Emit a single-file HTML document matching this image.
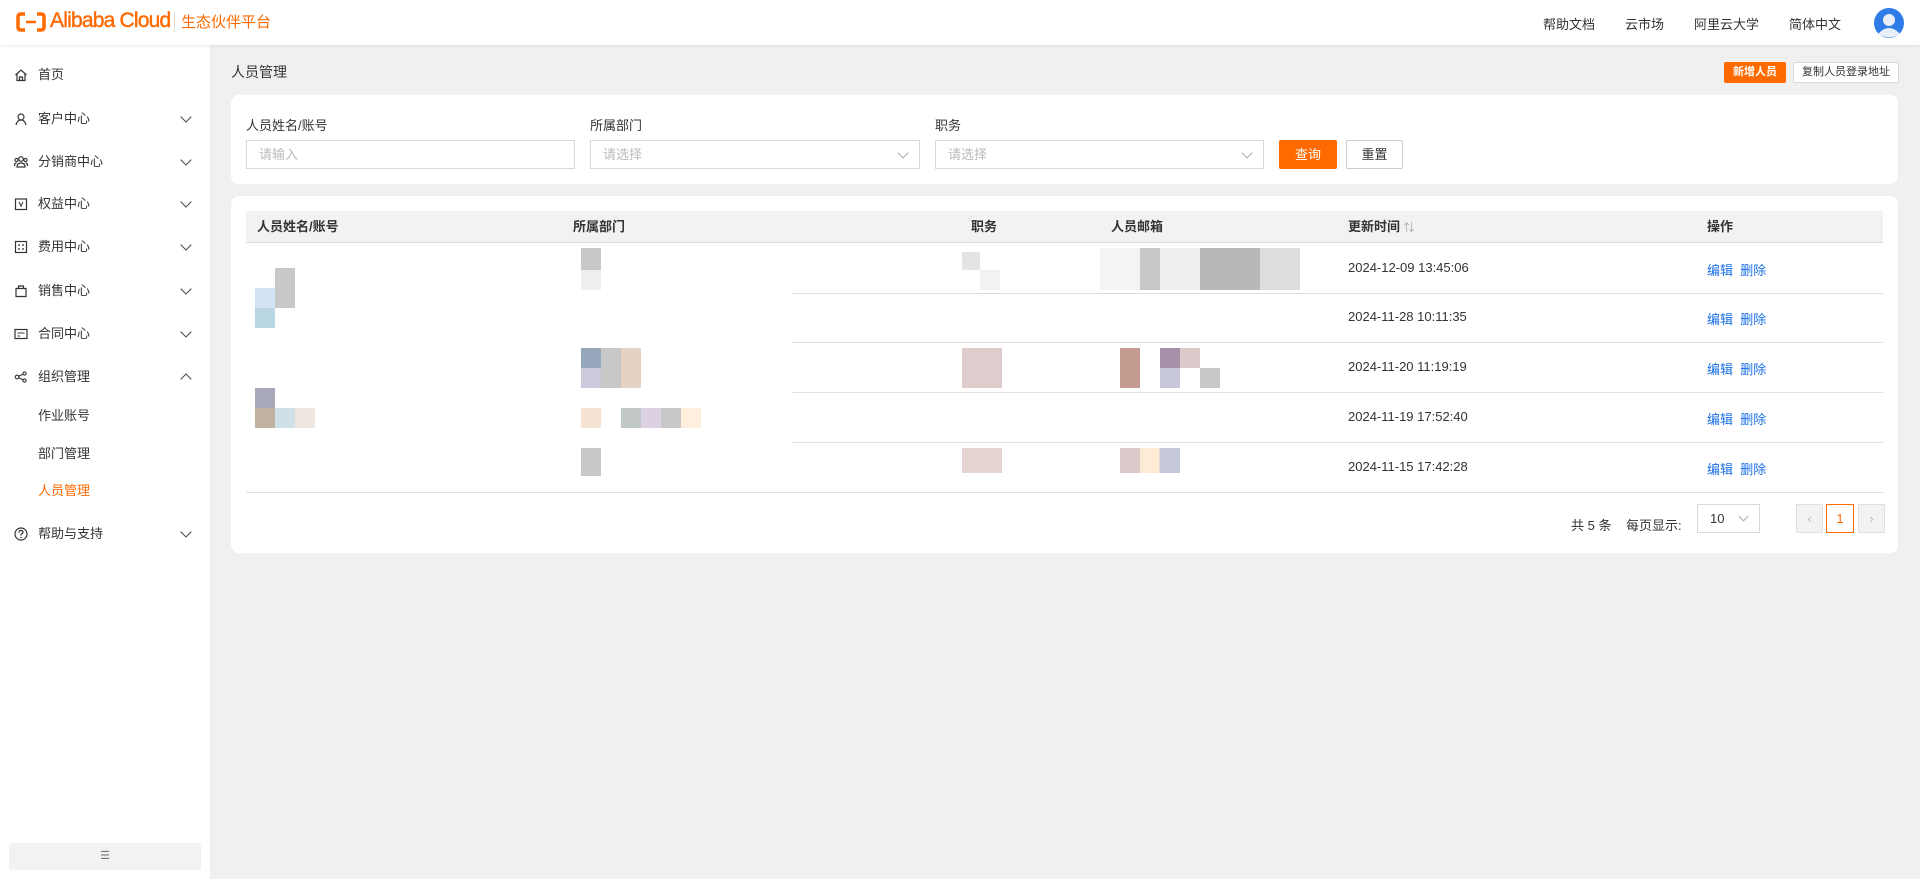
<!DOCTYPE html>
<html><head><meta charset="utf-8"><style>
*{box-sizing:border-box;margin:0;padding:0}
body{width:1920px;height:879px;overflow:hidden;background:#f0f0f0;font-family:"Liberation Sans","Noto Sans CJK SC",sans-serif;font-size:13px;color:#333;position:relative}
.abs{position:absolute}
.hdr{left:0;top:0;width:1920px;height:45px;background:#fff;box-shadow:0 1px 3px rgba(0,0,0,.08);z-index:2}
.side{left:0;top:45px;width:210px;height:834px;background:#fff}
.mi{position:absolute;left:14px;width:180px;height:20px;font-size:13px;color:#333;line-height:20px}
.mi .ic{position:absolute;left:0;top:3px;width:14px;height:14px}
.mi .t{position:absolute;left:24px}
.mi .ch{position:absolute;left:168px;top:4px;width:8px;height:8px;border-right:1.5px solid #444;border-bottom:1.5px solid #444;transform:rotate(45deg)}
.mi .ch.up{transform:rotate(-135deg);top:8px}
.card{background:#fff;border-radius:8px}
.inp{height:29px;border:1px solid #d9d9d9;background:#fff;color:#bbb;padding-left:12px;line-height:27px;font-size:13px}
.inp .dd{position:absolute;right:12px;top:8px;width:8px;height:8px;border-right:1px solid #aaa;border-bottom:1px solid #aaa;transform:rotate(45deg)}
.th{top:0;font-weight:bold;color:#333;line-height:32px}
.rl{height:1px;background:#e0e0e0}
.dt{color:#333}
.lk{color:#1a6fe6}
.px{position:absolute}
</style></head><body>
<div class="abs hdr">
 <svg class="abs" style="left:16px;top:12px" width="30" height="20" viewBox="0 0 30 20"><path d="M9 2H5Q2 2 2 5V15Q2 18 5 18H9M21 2H25Q28 2 28 5V15Q28 18 25 18H21" fill="none" stroke="#ff6a00" stroke-width="3.5"/><path d="M10 10H20" stroke="#ff6a00" stroke-width="2.5"/></svg>
 <div class="abs" style="left:50px;top:9px;font-size:21px;color:#ff6a00;letter-spacing:-0.8px;-webkit-text-stroke:0.4px #ff6a00">Alibaba Cloud</div>
 <div class="abs" style="left:174px;top:12px;width:1px;height:20px;background:#ddd"></div>
 <div class="abs" style="left:181px;top:11px;font-size:15px;color:#ff6a00">生态伙伴平台</div>
 <div class="abs" style="left:1543px;top:14px;font-size:13px">帮助文档</div>
 <div class="abs" style="left:1625px;top:14px;font-size:13px">云市场</div>
 <div class="abs" style="left:1694px;top:14px;font-size:13px">阿里云大学</div>
 <div class="abs" style="left:1789px;top:14px;font-size:13px">简体中文</div>
 <svg class="abs" style="left:1874px;top:8px" width="30" height="30" viewBox="0 0 30 30"><circle cx="15" cy="15" r="15" fill="#2f7ce8"/><circle cx="15" cy="12" r="6" fill="#e8eef8"/><path d="M4 26Q15 14 26 26Q15 33 4 26Z" fill="#e8eef8"/></svg>
</div>
<div class="abs side">
 <div class="mi" style="top:20px"><svg class="ic" viewBox="0 0 14 14"><path d="M1.5 7L7 2L12.5 7M3 6V12.5H11V6M5.5 12.5V9H8.5V12.5" fill="none" stroke="#333" stroke-width="1.2"/></svg><span class="t">首页</span></div>
 <div class="mi" style="top:64px"><svg class="ic" viewBox="0 0 14 14"><circle cx="7" cy="5" r="3" fill="none" stroke="#333" stroke-width="1.2"/><path d="M2 13Q3 8 7 8Q11 8 12 13" fill="none" stroke="#333" stroke-width="1.2"/></svg><span class="t">客户中心</span><i class="ch"></i></div>
 <div class="mi" style="top:107px"><svg class="ic" viewBox="0 0 14 14"><circle cx="7" cy="4" r="2.3" fill="none" stroke="#333" stroke-width="1.2"/><circle cx="2.5" cy="5" r="1.6" fill="none" stroke="#333" stroke-width="1.1"/><circle cx="11.5" cy="5" r="1.6" fill="none" stroke="#333" stroke-width="1.1"/><path d="M3 12Q3 8 7 8Q11 8 11 12ZM0.5 11Q0.5 8 2.5 8M13.5 11Q13.5 8 11.5 8" fill="none" stroke="#333" stroke-width="1.2"/></svg><span class="t">分销商中心</span><i class="ch"></i></div>
 <div class="mi" style="top:149px"><svg class="ic" viewBox="0 0 14 14"><rect x="1.5" y="2" width="11" height="10.5" fill="none" stroke="#333" stroke-width="1.2"/><path d="M5 5L7 9L9 5M7 9V10" fill="none" stroke="#333" stroke-width="1"/></svg><span class="t">权益中心</span><i class="ch"></i></div>
 <div class="mi" style="top:192px"><svg class="ic" viewBox="0 0 14 14"><rect x="1.5" y="1.5" width="11" height="11" fill="none" stroke="#333" stroke-width="1.2"/><path d="M4 5H6M8 5H10M4 9H6M8 9H10" stroke="#333" stroke-width="1.2"/></svg><span class="t">费用中心</span><i class="ch"></i></div>
 <div class="mi" style="top:236px"><svg class="ic" viewBox="0 0 14 14"><path d="M2 4.5H12V12.5H2ZM4.5 4.5V2H9.5V4.5" fill="none" stroke="#333" stroke-width="1.2"/></svg><span class="t">销售中心</span><i class="ch"></i></div>
 <div class="mi" style="top:279px"><svg class="ic" viewBox="0 0 14 14"><rect x="1" y="2.5" width="12" height="9" fill="none" stroke="#333" stroke-width="1.2"/><path d="M3.5 6H10.5M3.5 9H6" stroke="#333" stroke-width="1.1"/></svg><span class="t">合同中心</span><i class="ch"></i></div>
 <div class="mi" style="top:322px"><svg class="ic" viewBox="0 0 14 14"><circle cx="3" cy="7" r="1.8" fill="none" stroke="#333" stroke-width="1.1"/><circle cx="10.5" cy="3.5" r="1.6" fill="none" stroke="#333" stroke-width="1.1"/><circle cx="10.5" cy="10.5" r="1.6" fill="none" stroke="#333" stroke-width="1.1"/><path d="M4.6 6.2L9 4.2M4.6 7.8L9 9.8" stroke="#333" stroke-width="1.1"/></svg><span class="t">组织管理</span><i class="ch up"></i></div>
 <div class="mi" style="top:361px"><span class="t">作业账号</span></div>
 <div class="mi" style="top:399px"><span class="t">部门管理</span></div>
 <div class="mi" style="top:436px;color:#ff6a00"><span class="t">人员管理</span></div>
 <div class="mi" style="top:479px"><svg class="ic" viewBox="0 0 14 14"><circle cx="7" cy="7" r="6" fill="none" stroke="#333" stroke-width="1.2"/><path d="M5 5.5Q5 3.5 7 3.5Q9 3.5 9 5.3Q9 6.5 7 7.3V8.5" fill="none" stroke="#333" stroke-width="1.2"/><circle cx="7" cy="10.5" r=".8" fill="#333"/></svg><span class="t">帮助与支持</span><i class="ch"></i></div>
 <div class="abs" style="left:9px;top:798px;width:192px;height:27px;background:#f2f2f2;border-radius:3px;text-align:center;line-height:27px;color:#777;font-size:11px">☰</div>
</div>

<div class="abs" style="left:231px;top:62px;font-size:14px;color:#333">人员管理</div>
<div class="abs" style="left:1724px;top:62px;width:62px;height:21px;background:#ff6a00;color:#fff;font-size:11px;text-align:center;line-height:21px;border-radius:2px;font-weight:bold">新增人员</div>
<div class="abs" style="left:1793px;top:62px;width:106px;height:21px;background:#fff;border:1px solid #d9d9d9;font-size:11px;text-align:center;line-height:19px;border-radius:2px">复制人员登录地址</div>

<div class="abs card" style="left:231px;top:95px;width:1667px;height:89px">
 <div class="abs" style="left:15px;top:20px">人员姓名/账号</div>
 <div class="abs" style="left:359px;top:20px">所属部门</div>
 <div class="abs" style="left:704px;top:20px">职务</div>
 <div class="abs inp" style="left:15px;top:45px;width:329px">请输入</div>
 <div class="abs inp" style="left:359px;top:45px;width:330px">请选择<i class="dd"></i></div>
 <div class="abs inp" style="left:704px;top:45px;width:329px">请选择<i class="dd"></i></div>
 <div class="abs" style="left:1048px;top:45px;width:58px;height:29px;background:#ff6a00;color:#fff;text-align:center;line-height:29px;border-radius:2px">查询</div>
 <div class="abs" style="left:1115px;top:45px;width:57px;height:29px;border:1px solid #ccc;text-align:center;line-height:27px;border-radius:2px">重置</div>
</div>

<div class="abs card" style="left:231px;top:196px;width:1667px;height:357px">
 <div class="abs" style="left:15px;top:15px;width:1637px;height:32px;background:#f2f2f2;border-bottom:1px solid #ddd"></div>
 <div class="abs" style="left:15px;top:15px;width:1637px;height:32px">
  <div class="abs th" style="left:11px">人员姓名/账号</div>
  <div class="abs th" style="left:327px">所属部门</div>
  <div class="abs th" style="left:725px">职务</div>
  <div class="abs th" style="left:865px">人员邮箱</div>
  <div class="abs th" style="left:1102px">更新时间 <span style="color:#aaa;font-weight:normal;font-size:11px">⇅</span></div>
  <div class="abs th" style="left:1461px">操作</div>
 </div>
 <div class="abs rl" style="left:561px;top:97px;width:1091px"></div>
 <div class="abs rl" style="left:561px;top:146px;width:1091px"></div>
 <div class="abs rl" style="left:561px;top:196px;width:1091px"></div>
 <div class="abs rl" style="left:561px;top:246px;width:1091px"></div>
 <div class="abs rl" style="left:15px;top:296px;width:1637px"></div>
 <div class="abs dt" style="left:1117px;top:64px">2024-12-09 13:45:06</div>
 <div class="abs dt" style="left:1117px;top:113px">2024-11-28 10:11:35</div>
 <div class="abs dt" style="left:1117px;top:163px">2024-11-20 11:19:19</div>
 <div class="abs dt" style="left:1117px;top:213px">2024-11-19 17:52:40</div>
 <div class="abs dt" style="left:1117px;top:263px">2024-11-15 17:42:28</div>
 <div class="abs lk" style="left:1476px;top:64px">编辑&nbsp;&nbsp;删除</div>
 <div class="abs lk" style="left:1476px;top:113px">编辑&nbsp;&nbsp;删除</div>
 <div class="abs lk" style="left:1476px;top:163px">编辑&nbsp;&nbsp;删除</div>
 <div class="abs lk" style="left:1476px;top:213px">编辑&nbsp;&nbsp;删除</div>
 <div class="abs lk" style="left:1476px;top:263px">编辑&nbsp;&nbsp;删除</div>
 <!-- blurred blocks -->
 <div class="px" style="left:24px;top:92px;width:20px;height:20px;background:#d4e3f4"></div>
 <div class="px" style="left:44px;top:72px;width:20px;height:40px;background:#c8c8c8"></div>
 <div class="px" style="left:24px;top:112px;width:20px;height:20px;background:#b9d6e2"></div>
 <div class="px" style="left:24px;top:192px;width:20px;height:20px;background:#a7a8b8"></div>
 <div class="px" style="left:24px;top:212px;width:20px;height:20px;background:#c0b4a0"></div>
 <div class="px" style="left:44px;top:212px;width:20px;height:20px;background:#d0e0e8"></div>
 <div class="px" style="left:64px;top:212px;width:20px;height:20px;background:#f0e6e0"></div>
 <div class="px" style="left:350px;top:52px;width:20px;height:22px;background:#c8c8c8"></div>
 <div class="px" style="left:350px;top:74px;width:20px;height:20px;background:#eee"></div>
 <div class="px" style="left:350px;top:152px;width:20px;height:20px;background:#97a7bb"></div>
 <div class="px" style="left:350px;top:172px;width:20px;height:20px;background:#cacadb"></div>
 <div class="px" style="left:370px;top:152px;width:20px;height:40px;background:#c8c8c8"></div>
 <div class="px" style="left:390px;top:152px;width:20px;height:40px;background:#e6d2c2"></div>
 <div class="px" style="left:350px;top:212px;width:20px;height:20px;background:#f6e3d1"></div>
 <div class="px" style="left:390px;top:212px;width:80px;height:20px;background:linear-gradient(90deg,#c2c8c7 25%,#dbd1e3 25% 50%,#c8c8c8 50% 75%,#ffefdd 75%)"></div>
 <div class="px" style="left:350px;top:252px;width:20px;height:28px;background:#c8c8c8"></div>
 <div class="px" style="left:731px;top:56px;width:18px;height:18px;background:#e4e4e4"></div>
 <div class="px" style="left:749px;top:74px;width:20px;height:20px;background:#f2f2f2"></div>
 <div class="px" style="left:731px;top:152px;width:40px;height:40px;background:#dfcccc"></div>
 <div class="px" style="left:731px;top:252px;width:40px;height:25px;background:#e4d4d2"></div>
 <div class="px" style="left:869px;top:52px;width:200px;height:42px;background:linear-gradient(90deg,#f4f4f4 20%,#c8c8c8 20% 30%,#eee 30% 50%,#b8b8b8 50% 80%,#ddd 80%)"></div>
 <div class="px" style="left:889px;top:152px;width:20px;height:40px;background:#c49c90"></div>
 <div class="px" style="left:929px;top:152px;width:20px;height:20px;background:#a890a8"></div>
 <div class="px" style="left:929px;top:172px;width:20px;height:20px;background:#c8c8dc"></div>
 <div class="px" style="left:949px;top:152px;width:20px;height:20px;background:#dcc9c9"></div>
 <div class="px" style="left:969px;top:172px;width:20px;height:20px;background:#c8c8c8"></div>
 <div class="px" style="left:889px;top:252px;width:60px;height:25px;background:linear-gradient(90deg,#dcc9c9 33%,#fdebd6 33% 66%,#c6c8dc 66%)"></div>
 <!-- pagination -->
 <div class="abs" style="left:1340px;top:319px">共 5 条</div>
 <div class="abs" style="left:1395px;top:319px">每页显示:</div>
 <div class="abs" style="left:1466px;top:308px;width:63px;height:29px;border:1px solid #d9d9d9;padding-left:12px;line-height:27px">10<i style="position:absolute;right:12px;top:8px;width:7px;height:7px;border-right:1px solid #aaa;border-bottom:1px solid #aaa;transform:rotate(45deg)"></i></div>
 <div class="abs" style="left:1565px;top:308px;width:27px;height:29px;background:#f2f2f2;border:1px solid #e0e0e0;text-align:center;line-height:27px;color:#bbb">‹</div>
 <div class="abs" style="left:1595px;top:308px;width:28px;height:29px;border:1px solid #ff6a00;text-align:center;line-height:27px;color:#ff6a00">1</div>
 <div class="abs" style="left:1627px;top:308px;width:27px;height:29px;background:#f2f2f2;border:1px solid #e0e0e0;text-align:center;line-height:27px;color:#bbb">›</div>
</div>
</body></html>
